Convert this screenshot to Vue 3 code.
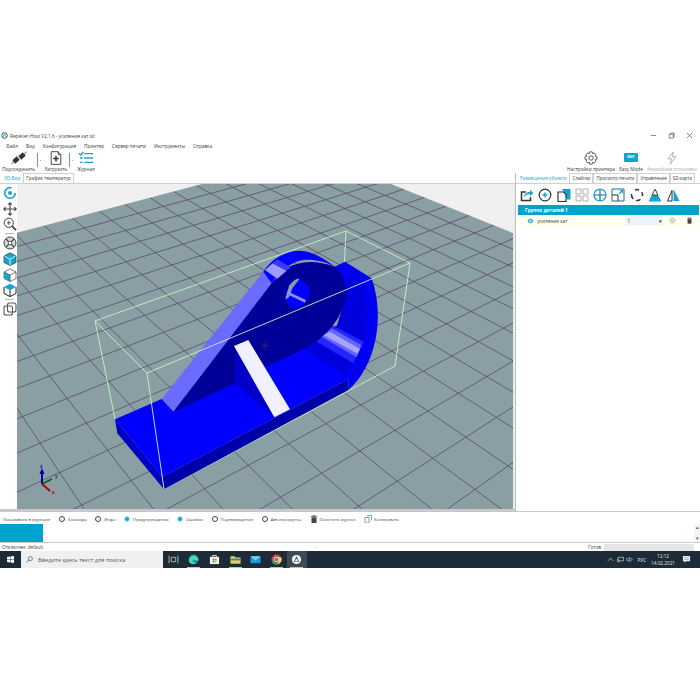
<script setup>
const vpA = [-323, -102]
const vpB = [1317, -109]
const far = [316, 154]

// grid lines run from the back edges of the plate to the vanishing points
const lineA = (t) => {
  const d = 1001 / (1 - 0.0178 * t)
  const x = vpB[0] - d
  const y = far[1] - 0.263 * (x - far[0])
  return { x1: x, y1: y, x2: x + (x - vpA[0]) * 3, y2: y + (y - vpA[1]) * 3 }
}
const lineB = (t) => {
  const d = 639 / (1 - 0.0242 * t)
  const x = vpA[0] + d
  const y = far[1] + 0.4 * (x - far[0])
  return { x1: x, y1: y, x2: x - (vpB[0] - x) * 3, y2: y + (y - vpB[1]) * 3 }
}
const gridLines = []
for (let t = 1; t < 40; t++) {
  if (0.0178 * t < 0.9) gridLines.push(lineA(t))
  if (0.0242 * t < 0.9) gridLines.push(lineB(t))
}

const menu = ['Файл', 'Вид', 'Конфигурация', 'Принтер', 'Сервер печати', 'Инструменты', 'Справка']
const sideTabs = ['Размещение объекта', 'Слайсер', 'Просмотр печати', 'Управление', 'SD-карта']
const radios = [
  { label: 'Команды', on: false },
  { label: 'Инфо', on: false },
  { label: 'Предупреждения', on: true },
  { label: 'Ошибки', on: true },
  { label: 'Подтверждение', on: false },
  { label: 'Автопрокрутка', on: false }
]
</script>

<template>
  <div class="page">
    <div class="window">
      <div class="titlebar">
        <svg class="app-icon" viewBox="0 0 10 10"><circle cx="5" cy="5" r="4" fill="#fff" stroke="#35505f" stroke-width="1.4"/><path d="M3 7 5 2.5 7 7" fill="none" stroke="#2a9fc4" stroke-width="1.2"/></svg>
        <span class="title">Repetier-Host V2.1.6 - усиление кат.stl</span>
        <div class="win-controls">
          <svg viewBox="0 0 8 8"><path d="M1 4h6" stroke="#555" stroke-width=".8"/></svg>
          <svg viewBox="0 0 8 8"><path d="M1.5 2.5h4.5v4.5h-4.5zM3 2.5v-1.3h4v4h-1" fill="none" stroke="#555" stroke-width=".8"/></svg>
          <svg viewBox="0 0 8 8"><path d="M1 1l6 6M7 1l-6 6" stroke="#555" stroke-width=".8"/></svg>
        </div>
      </div>

      <div class="menubar">
        <span v-for="m in menu" :key="m">{{ m }}</span>
      </div>

      <div class="toolbar">
        <div class="tool tool-connect">
          <svg viewBox="0 0 20 16"><path d="M.5 15.500 4 12.500M16 3.500 19.500.5" stroke="#333" stroke-width="1"/><path d="M3.500 13 9 8M11 8 16.500 3" stroke="#333" stroke-width="5.500"/></svg>
          <span>Подсоединить</span>
        </div>
        <div class="tool-sep"></div>
        <span class="tool-arrow">▪</span>
        <div class="tool tool-load">
          <svg viewBox="0 0 16 16"><path d="M2.500.8h8l3 3.500v11h-11zM10.500.8v3.500h3" fill="#fff" stroke="#333" stroke-width="1"/><path d="M8 5.500v6.500M4.800 8.700h6.400" stroke="#333" stroke-width="1.700"/></svg>
          <span>Загрузить</span>
        </div>
        <div class="tool-sep"></div>
        <span class="tool-arrow">▪</span>
        <div class="tool tool-log">
          <svg viewBox="0 0 18 16"><path d="M1 2.500 3 4.500 6 1M7 3h10M7 8h10M7 13h10M2 8h3M2 13h3" fill="none" stroke="#12a5d0" stroke-width="1.700"/></svg>
          <span>Журнал</span>
        </div>
        <div class="toolbar-fill"></div>
        <div class="tool tool-printer">
          <svg viewBox="0 0 16 16"><path d="M6.600 1h2.800l.5 2 1.800-.8 2 2-.9 1.800 2 .6v2.800l-2 .6.9 1.800-2 2-1.800-.9-.5 2.100H6.600l-.5-2.100-1.800.9-2-2 .9-1.800-2-.6V6.600l2-.6-.9-1.800 2-2 1.800.8z" fill="none" stroke="#333" stroke-width=".9"/><circle cx="8" cy="8" r="2.500" fill="none" stroke="#333" stroke-width=".9"/></svg>
          <span>Настройки принтера</span>
        </div>
        <div class="tool tool-easy">
          <div class="easy-badge">EASY</div>
          <span>Easy Mode</span>
        </div>
        <div class="tool tool-stop">
          <svg viewBox="0 0 16 16"><path d="M9.500 1 3.500 9h4l-1.500 6 6.500-8.500H8.500z" fill="none" stroke="#a8a8a8" stroke-width="1"/></svg>
          <span>Аварийная остановка</span>
        </div>
      </div>

      <div class="main">
        <div class="left">
          <div class="tabs">
            <span class="tab active">3D-Вид</span>
            <span class="tab">График температур</span>
          </div>
          <div class="view-row">
            <div class="view-tools">
              <svg viewBox="0 0 14 14"><circle cx="7" cy="7" r="5.300" fill="none" stroke="#12a5d0" stroke-width="1.700" stroke-dasharray="26 8"/><circle cx="7" cy="7" r="2" fill="#12a5d0"/></svg>
              <svg viewBox="0 0 14 14"><path d="M7 .8v12.400M.8 7h12.400M5.200 2.600 7 .8l1.800 1.800M5.200 11.400 7 13.200l1.800-1.800M2.600 5.200.8 7l1.800 1.800M11.400 5.200 13.200 7l-1.800 1.800" fill="none" stroke="#444" stroke-width="1.100"/></svg>
              <svg viewBox="0 0 14 14"><circle cx="5.800" cy="5.800" r="4.600" fill="none" stroke="#444" stroke-width="1"/><path d="M9 9.200l4 4" stroke="#444" stroke-width="1.800"/><path d="M5.800 3.800v4M3.800 5.800h4" stroke="#444" stroke-width=".9"/></svg>
              <div class="vt-sep"></div>
              <svg viewBox="0 0 14 14"><circle cx="7" cy="7" r="6" fill="#d8d8d8" stroke="#444" stroke-width="1"/><path d="M3 3l8 8M11 3l-8 8" stroke="#444" stroke-width="1.100"/><circle cx="7" cy="7" r="1.800" fill="#fff" stroke="#444" stroke-width=".7"/></svg>
              <svg viewBox="0 0 14 14"><path d="M7 .8 13 4v6.500L7 13.500 1 10.500V4z" fill="#12a5d0" stroke="#333" stroke-width=".7"/><path d="M1.500 4 7 7.200 12.500 4M7 7.200v6" fill="none" stroke="#d5f1f8" stroke-width="1"/></svg>
              <svg viewBox="0 0 14 14"><path d="M7 1 13 4v6.500L7 13.500 1 10.500V4z" fill="#fff" stroke="#444" stroke-width=".7"/><path d="M1 4l6 3v6.500L1 10.500z" fill="#12a5d0"/><path d="M1 4l6 3 6-3M7 7v6.500" fill="none" stroke="#444" stroke-width=".7"/></svg>
              <svg viewBox="0 0 14 14"><path d="M1 4v6.500l6 3 6-3V4" fill="#fff" stroke="#222" stroke-width="1"/><path d="M7 .8l6 3.200-6 3.200-6-3.200z" fill="#12a5d0"/><path d="M7 7v6.500" stroke="#222" stroke-width="1"/></svg>
              <div class="vt-sep"></div>
              <svg viewBox="0 0 14 14"><rect x="1" y="4" width="8.500" height="9" rx="2" fill="none" stroke="#555" stroke-width="1.100"/><rect x="4.500" y="1" width="8.500" height="9" rx="2" fill="none" stroke="#555" stroke-width="1.100"/></svg>
            </div>
            <svg class="view" viewBox="17 184 496 325">
              <rect x="17" y="184" width="496" height="325" fill="#f0f0f0"/>
              <polygon points="316,154 -300,316 -300,900 900,900 900,388" fill="#8a9fa3"/>
              <defs>
                <clipPath id="plate"><polygon points="316,154 -300,316 -300,900 900,900 900,388"/></clipPath>
                <clipPath id="hole"><ellipse cx="623" cy="220" rx="35" ry="46" transform="rotate(25 623 220)"/></clipPath>
              </defs>
              <g clip-path="url(#plate)">
                <line v-for="(l, i) in gridLines" :key="i" v-bind="l" stroke="#5b4a68" stroke-width=".8"/>
              </g>

              <g fill="none" stroke="#c6f3c4" stroke-width=".9">
                <path d="M95 321 346 231 410 263 395 366 164 489M346 231 343 290M95 321 147 373M95 321 115 419"/>
              </g>

              <g transform="translate(90 220) scale(.3333)">
                <polygon points="75,598 82,640 222,808 217,770" fill="#0000c4"/>
                <polygon points="217,770 222,808 775,510 775,478" fill="#0000a8"/>
                <polygon points="75,598 215,537 780,300 775,478 217,770" fill="#0000ff"/>

                <path d="M735 140 765 125 845 175C868 240 870 320 850 385 835 440 805 485 775 510L775 478 760 465 780 300Z" fill="#0000f4"/>
                <path d="M770 165 820 190 835 290 822 350 795 420 765 465 640 385 740 320 768 230Z" fill="#0000dc"/>
                <polygon points="680,365 725,315 822,365 790,430" fill="#2525ff"/>
                <polygon points="695,350 725,325 814,375 800,412" fill="#6565ff"/>
                <polygon points="700,345 720,335 810,387 803,401" fill="#a5a5ff"/>

                <path d="M250 575 540 190C575 140 640 105 735 140 765 165 775 210 765 245 750 300 710 345 660 378L530 440 435 490Z" fill="#000099"/>
                <polygon points="215,537 250,575 545,190 575,160 520,155" fill="#6b6bff"/>
                <path d="M520 155C545 115 590 92 630 92 665 92 700 115 735 140 690 118 650 115 620 125 590 135 565 160 545 190Z" fill="#0000ff"/>
                <polygon points="525,150 548,130 590,152 562,176" fill="#9d9dff"/>
                <polygon points="548,130 562,118 602,142 590,152" fill="#3a3aff"/>

                <ellipse cx="623" cy="220" rx="35" ry="46" transform="rotate(25 623 220)" fill="#0000ff"/>
                <g clip-path="url(#hole)">
                  <path d="M585 240 598 195 622 172 628 178 608 203 597 232Z" fill="#8a9fa3"/>
                  <path d="M618 168 670 175 662 205 645 188 628 178Z" fill="#00008a"/>
                  <polygon points="592,214 648,240 645,248 592,223" fill="#8f8fff"/>
                </g>

                <polygon points="435,378 435,490 553,592 470,450" fill="#0000c8"/>
                <polygon points="432,378 475,360 600,568 553,592" fill="#f0f0ff"/>
              </g>

              <g stroke="#c6f3c4" stroke-width=".9" fill="none">
                <path d="M147 373 410 263M147 373 164 489"/>
              </g>
              <path d="M260 346h10M265 341v10M261 342l8 8M269 342l-8 8" stroke="#4b2a5e" stroke-width=".5"/>

              <g class="axes">
                <path d="M42 484 42 472" stroke="#0000a8" stroke-width="2"/>
                <path d="M39.500 474 42 468 44.500 474z" fill="#0000a8"/>
                <path d="M42 484 52 479" stroke="#0a5c14" stroke-width="1.600"/>
                <path d="M42 484 50 491" stroke="#b00000" stroke-width="2"/>
                <text x="40" y="468" fill="#0000a8">z</text>
                <text x="55" y="478" fill="#0a5c14">y</text>
                <text x="52" y="494" fill="#b00000">x</text>
              </g>
            </svg>
          </div>
        </div>

        <div class="side">
          <div class="tabs side-tabs">
            <span v-for="(t, i) in sideTabs" :key="t" class="tab" :class="{ active: i === 0 }">{{ t }}</span>
          </div>
          <div class="side-tools">
            <svg viewBox="0 0 14 14"><path d="M6 4H1.500v8.500h9V9" fill="none" stroke="#333" stroke-width="1.500"/><path d="M4 9.500c0-3.500 3-5.500 6-5.500V1.800l3.500 3.200L10 8V6C7.500 6 5.500 7 4 9.500z" fill="#12a5d0"/></svg>
            <svg viewBox="0 0 14 14"><circle cx="7" cy="7" r="5.800" fill="none" stroke="#333" stroke-width="1.200"/><path d="M7 4.500v5M4.500 7h5" stroke="#12a5d0" stroke-width="1.500"/></svg>
            <svg viewBox="0 0 14 14"><path d="M5 1h8.500v10.500H10z" fill="#12a5d0"/><path d="M1 4h5.500l2.500 2.500v7H1z" fill="#fff" stroke="#333" stroke-width="1.200"/></svg>
            <svg viewBox="0 0 14 14"><path d="M1 1h5v5H1zM8 1h5v5H8zM1 8h5v5H1zM8 8h5v5H8z" fill="none" stroke="#a5a5a5" stroke-width=".9"/></svg>
            <svg viewBox="0 0 14 14"><circle cx="7" cy="7" r="6" fill="none" stroke="#12a5d0" stroke-width="1.200"/><path d="M7 1v12M1 7h12" stroke="#12728f" stroke-width="1.200"/></svg>
            <svg viewBox="0 0 14 14"><path d="M1 1h12v12H1z" fill="none" stroke="#12728f"/><path d="M1 7h6v6" fill="none" stroke="#333"/><path d="M8 6l3.500-3.500M8.800 2.500h2.700v2.700" fill="none" stroke="#12a5d0" stroke-width="1.100"/></svg>
            <svg viewBox="0 0 14 14"><path d="M5 2A5.500 5.500 0 0 1 9 2M11.700 4.200A5.500 5.500 0 0 1 12.500 8M10.500 11.300A5.500 5.500 0 0 1 6 12.400M3.300 11A5.500 5.500 0 0 1 1.500 6" fill="none" stroke="#333" stroke-width="1.500"/></svg>
            <svg viewBox="0 0 14 14"><path d="M7 1.200 13.500 13.500H.5L3.800 7.200z" fill="#12a5d0"/><path d="M7 1.200 4 7h6z" fill="#fff" stroke="#333" stroke-width=".9"/></svg>
            <svg viewBox="0 0 14 14"><path d="M6 2.500 1.500 13H6z" fill="none" stroke="#333" stroke-width="1"/><path d="M7.500 1 13.500 13H7.500z" fill="#12a5d0"/></svg>
          </div>
          <div class="group-head">Группа деталей 1</div>
          <div class="part-row">
            <svg class="eye" viewBox="0 0 10 8"><path d="M.5 4C2 1.500 3.500.8 5 .8S8 1.500 9.500 4C8 6.500 6.500 7.200 5 7.200S2 6.500.5 4z" fill="#3fb0cf"/><circle cx="5" cy="4" r="1.400" fill="#d8f1f8"/></svg>
            <span class="part-name">усиление кат</span>
            <div class="part-select"><span>1</span><span class="sel-arrow">▾</span></div>
            <svg class="part-icon" viewBox="0 0 10 10"><circle cx="5" cy="5" r="3.600" fill="none" stroke="#666" stroke-width=".8" stroke-dasharray="1.300 .5"/><circle cx="5" cy="5" r="1.700" fill="none" stroke="#666" stroke-width=".6"/></svg>
            <svg class="part-icon trash" viewBox="0 0 10 10"><path d="M1.500 2.200h7M3.500 2V1h3v1" fill="none" stroke="#444" stroke-width=".8"/><path d="M2.200 3h5.600v6.500H2.200z" fill="#444"/></svg>
          </div>
        </div>
      </div>

      <div class="log">
        <div class="log-bar">
          <span class="log-label">Показывать в журнале:</span>
          <span v-for="r in radios" :key="r.label" class="radio-item">
            <i class="radio" :class="{ on: r.on }"></i>{{ r.label }}
          </span>
          <span class="radio-item action">
            <svg viewBox="0 0 8 8"><path d="M.8 1.500h6.400M3 1.200V.5h2v.7" fill="none" stroke="#444" stroke-width=".7"/><path d="M1.500 2.300h5V8h-5z" fill="#444"/></svg>
            Очистить журнал
          </span>
          <span class="radio-item action">
            <svg viewBox="0 0 8 8"><path d="M1 2.500h4V8H1z" fill="#fff" stroke="#555" stroke-width=".6"/><path d="M3 .6h4.400v5" fill="none" stroke="#12a5d0" stroke-width=".8"/></svg>
            Копировать
          </span>
        </div>
        <div class="log-body">
          <div class="log-mark"></div>
          <div class="log-scroll"><span>▴</span><span>▾</span></div>
        </div>
      </div>

      <div class="status">
        <span class="status-left">Отключен: default</span>
        <span class="status-mid">-</span>
        <span class="status-ready">Готов</span>
        <div class="progress"></div>
      </div>

      <div class="taskbar">
        <div class="start">
          <svg viewBox="0 0 8 8"><path d="M0 1.100 3.400.6v3.100H0zM3.900.5 8 0v3.700H3.900zM0 4.200h3.400v3.200L0 6.900zM3.900 4.200H8V8l-4.100-.6z" fill="#fff"/></svg>
        </div>
        <div class="search">
          <svg viewBox="0 0 8 8"><circle cx="5" cy="3" r="2.300" fill="none" stroke="#333" stroke-width=".7"/><path d="M3.300 4.700 .8 7.400" stroke="#333" stroke-width=".8"/></svg>
          <span>Введите здесь текст для поиска</span>
        </div>
        <div class="task-icons">
          <div class="task-icon">
            <svg viewBox="0 0 10 10"><path d="M3 3h4v4H3zM1 1.500v7M9 1.500v7" fill="none" stroke="#cfd6da" stroke-width=".7"/></svg>
          </div>
          <div class="task-icon used">
            <svg viewBox="0 0 12 12"><circle cx="6" cy="6" r="5.500" fill="#1576c6"/><path d="M1 7C1.500 3 5 1 8 2c2.500 1 3.500 3.500 3.500 5H5c0 2 3 3 5 2-2 2.500-6 2.500-8 .5C1.500 9 1 8 1 7z" fill="#4ed6a0"/></svg>
          </div>
          <div class="task-icon">
            <svg viewBox="0 0 12 12"><path d="M1 3h10v8H1z" fill="#f4f4f4"/><path d="M4 3V1.500h4V3" fill="none" stroke="#e8e8e8"/><path d="M4 5h2v2H4z" fill="#e8502a"/><path d="M6.300 5h2v2h-2z" fill="#7fba00"/><path d="M4 7.300h2v2H4z" fill="#00a4ef"/><path d="M6.300 7.300h2v2h-2z" fill="#ffb900"/></svg>
          </div>
          <div class="task-icon used">
            <svg viewBox="0 0 12 12"><path d="M.5 2.500h4.500l1 1.200h5.500v7H.5z" fill="#f6c94a"/><path d="M.5 5h11v2H.5z" fill="#1e8fce"/></svg>
          </div>
          <div class="task-icon">
            <svg viewBox="0 0 12 12"><path d="M.5 2.500h11v7.500H.5z" fill="#1c9ae0"/><path d="M.5 2.500 6 7l5.500-4.500z" fill="#7fd0f5"/></svg>
          </div>
          <div class="task-icon used">
            <svg viewBox="0 0 12 12"><circle cx="6" cy="6" r="5.500" fill="#dd4b3a"/><path d="M6 6 1 9a5.500 5.500 0 0 0 6.500 2.300z" fill="#2ba14b"/><path d="M6 3.500h5.100A5.500 5.500 0 0 1 7 11.400L8.500 6z" fill="#f7c93d"/><circle cx="6" cy="6" r="2.700" fill="#fff"/><circle cx="6" cy="6" r="2" fill="#3a7ee0"/></svg>
          </div>
          <div class="task-icon used current">
            <svg viewBox="0 0 12 12"><circle cx="6" cy="6" r="5" fill="#f2f2f2"/><path d="M3 8.500 6 2.500 9 8.500z" fill="#28586e"/><circle cx="6" cy="6.800" r="1.300" fill="#f2f2f2"/></svg>
          </div>
        </div>
        <div class="tray">
          <span class="tray-up">
            <svg viewBox="0 0 8 8"><path d="M1 5.500 4 2.500l3 3" fill="none" stroke="#e6e6e6" stroke-width=".8"/></svg>
          </span>
          <svg class="tray-icon" viewBox="0 0 8 8"><path d="M1.500 1.500H7.500V5.500H1.500zM.5 3v3.500h3" fill="none" stroke="#e6e6e6" stroke-width=".7"/></svg>
          <svg class="tray-icon" viewBox="0 0 8 8"><path d="M.8 3H2.300L4 1.500v5L2.300 5H.8zM5 2.800a2 2 0 0 1 0 2.400M6.200 2a3.200 3.200 0 0 1 0 4" fill="none" stroke="#e6e6e6" stroke-width=".6"/></svg>
          <span class="tray-lang">РУС</span>
          <span class="clock"><span>12:12</span><span>14.02.2021</span></span>
          <svg class="tray-note" viewBox="0 0 10 10"><path d="M1 1h8v6H4.500L3 9V7H1z" fill="#eaeaea"/><path d="M2.500 3h5M2.500 5h5" stroke="#7b8790" stroke-width=".6"/></svg>
        </div>
      </div>
    </div>
  </div>
</template>

<style scoped>
.page {
  width: 700px;
  height: 700px;
  background: #fff;
  padding-top: 130px;
  box-sizing: border-box;
  font-family: "Open Sans", "Noto Sans", sans-serif;
  font-size: 4.7px;
  color: #3a3a3a;
  overflow: hidden;
}

.window {
  display: flex;
  flex-direction: column;
  height: 438px;
}

.titlebar {
  height: 11px;
  display: flex;
  align-items: center;
  padding-left: 1px;
}

.app-icon {
  width: 7px;
  height: 7px;
  margin-right: 2px;
}

.win-controls {
  margin-left: auto;
  display: flex;
  gap: 11px;
  padding-right: 7px;
}

.win-controls svg {
  width: 7px;
  height: 7px;
}

.menubar {
  height: 9px;
  display: flex;
  align-items: center;
  gap: 8px;
  padding-left: 6px;
}

.toolbar {
  height: 23px;
  display: flex;
  align-items: stretch;
}

.tool {
  display: flex;
  flex-direction: column;
  align-items: center;
  justify-content: flex-end;
  white-space: nowrap;
  padding-bottom: 1px;
  gap: 1px;
  line-height: 6px;
}

.tool svg {
  width: 16px;
  height: 14px;
}

.tool-connect {
  width: 37px;
}

.tool-sep {
  width: 1px;
  height: 14px;
  margin-top: 3px;
  background: #8c8c8c;
}

.tool-arrow {
  font-size: 3px;
  width: 5px;
  text-align: center;
  line-height: 21px;
}

.tool-load {
  width: 26px;
}

.tool-log {
  width: 22px;
}

.toolbar-fill {
  flex: 1;
}

.tool-printer {
  width: 54px;
}

.tool-easy {
  width: 26px;
}

.easy-badge {
  width: 14px;
  height: 9px;
  margin-bottom: 3px;
  background: #0ea5d1;
  border-radius: 1px;
  color: #fff;
  font-size: 3px;
  font-weight: 700;
  line-height: 9px;
  text-align: center;
}

.tool-stop {
  width: 56px;
  color: #b0b0b0;
}

.main {
  display: flex;
  height: 338px;
}

.left {
  width: 516px;
  flex: none;
  display: flex;
  flex-direction: column;
  border-right: 1px solid #bdbdbd;
  box-sizing: border-box;
}

.tabs {
  height: 11px;
  display: flex;
  align-items: flex-end;
  padding-left: 1px;
  border-bottom: 1px solid #cfcfcf;
  box-sizing: border-box;
}

.tab {
  height: 10px;
  line-height: 8px;
  padding: 0 2px;
  border: 1px solid #d0d0d0;
  border-bottom: none;
  box-sizing: border-box;
  background: #fff;
  white-space: nowrap;
}

.tab.active {
  color: #12a5d0;
  border-color: transparent;
}

.view-row {
  flex: 1;
  display: flex;
  border-bottom: 2px solid #c9c9c9;
  background: #ececec;
  min-height: 0;
}

.view-tools {
  width: 17px;
  flex: none;
  display: flex;
  flex-direction: column;
  align-items: center;
  padding: 2px 0 0 2px;
  gap: 1.6px;
  box-sizing: border-box;
  background: #fff;
}

.view-tools svg {
  width: 14px;
  height: 14px;
  flex: none;
}

.vt-sep {
  width: 9px;
  height: 1px;
  background: #b5b5b5;
  margin: .5px 0;
}

.view {
  width: 496px;
  height: 325px;
  flex: none;
  display: block;
}

.axes text {
  font-family: "Liberation Sans", sans-serif;
  font-size: 5px;
  font-weight: 700;
}

.side {
  flex: 1;
  min-width: 0;
  display: flex;
  flex-direction: column;
}

.side-tabs {
  padding-left: 1px;
  font-size: 4.45px;
}

.side-tools {
  height: 21px;
  display: flex;
  align-items: center;
  gap: 4.3px;
  padding-left: 4px;
  box-sizing: border-box;
}

.side-tools svg {
  width: 14px;
  height: 14px;
  flex: none;
}

.group-head {
  height: 10px;
  line-height: 10px;
  margin: 0 1px 0 2px;
  padding-left: 7px;
  background: #00a3cc;
  color: #fff;
  font-weight: 700;
}

.part-row {
  height: 11px;
  display: flex;
  align-items: center;
  margin: 0 1px 0 2px;
  background: #fffff0;
}

.eye {
  width: 7px;
  height: 6px;
  margin-left: 8.500px;
  flex: none;
}

.part-name {
  margin-left: 4px;
  width: 88px;
  flex: none;
}

.part-select {
  width: 37px;
  height: 9px;
  display: flex;
  align-items: center;
  justify-content: space-between;
  padding: 0 1px 0 2px;
  box-sizing: border-box;
  background: #e9f3f8;
}

.sel-arrow {
  color: #222;
}

.part-icon {
  width: 7px;
  height: 7px;
  margin-left: 6.500px;
  flex: none;
}

.part-icon.trash {
  margin-left: 10px;
}

.log {
  height: 32px;
  display: flex;
  flex-direction: column;
  border-top: 1px solid #c9c9c9;
  border-bottom: 1px solid #c9c9c9;
  padding-top: 2px;
  box-sizing: border-box;
}

.log-bar {
  height: 10px;
  display: flex;
  align-items: center;
  padding-left: 3px;
  white-space: nowrap;
  font-size: 4.2px;
}

.log-label {
  width: 56px;
}

.radio-item {
  display: flex;
  align-items: center;
  gap: 3px;
  color: #444;
  margin-right: 8.500px;
}

.radio {
  width: 4px;
  height: 4px;
  border: 1px solid #444;
  border-radius: 50%;
  background: #fff;
}

.radio.on {
  border-color: #bfe3ee;
  background: #12a5d0;
}

.action {
  gap: 2px;
}

.action svg {
  width: 8px;
  height: 8px;
}

.log-body {
  flex: 1;
  display: flex;
  justify-content: space-between;
  min-height: 0;
}

.log-mark {
  width: 43px;
  background: #00a3cc;
}

.log-scroll {
  width: 6px;
  display: flex;
  flex-direction: column;
  justify-content: space-between;
  align-items: center;
  font-size: 5px;
  line-height: 7px;
  color: #555;
  background: #f4f4f4;
}

.status {
  height: 8px;
  display: flex;
  align-items: center;
  padding-left: 2px;
}

.status-left {
  width: 313px;
}

.status-mid {
  width: 273px;
}

.status-ready {
  width: 16px;
}

.progress {
  width: 90px;
  height: 7px;
  background: #e6e6e6;
}

.taskbar {
  height: 17px;
  display: flex;
  background: #1c2b36;
  color: #e4e8ea;
}

.start {
  width: 21px;
  display: flex;
  align-items: center;
  justify-content: center;
}

.start svg {
  width: 7px;
  height: 7px;
}

.search {
  width: 142px;
  display: flex;
  align-items: center;
  gap: 5px;
  padding-left: 5px;
  box-sizing: border-box;
  background: #f0f0f0;
  color: #555;
  font-size: 5.700px;
}

.search svg {
  width: 7px;
  height: 7px;
}

.task-icons {
  display: flex;
}

.task-icon {
  width: 20.600px;
  display: flex;
  align-items: center;
  justify-content: center;
}

.task-icon svg {
  width: 11px;
  height: 11px;
}

.task-icon.used {
  background: linear-gradient(#d9b98a, #d9b98a) center bottom / 13px 1px no-repeat;
}

.task-icon.current {
  background-color: #3d4a54;
}

.tray {
  margin-left: auto;
  display: flex;
  align-items: center;
  padding-right: 9px;
}

.tray-up {
  display: flex;
  margin-right: 3px;
}

.tray-up svg,
.tray-icon {
  width: 7px;
  height: 7px;
}

.tray-icon {
  margin-right: 2.500px;
}

.tray-lang {
  margin: 0 5px 0 1.500px;
}

.clock {
  display: flex;
  flex-direction: column;
  align-items: center;
  line-height: 6.500px;
  margin-right: 7px;
}

.tray-note {
  width: 9px;
  height: 9px;
}
</style>
